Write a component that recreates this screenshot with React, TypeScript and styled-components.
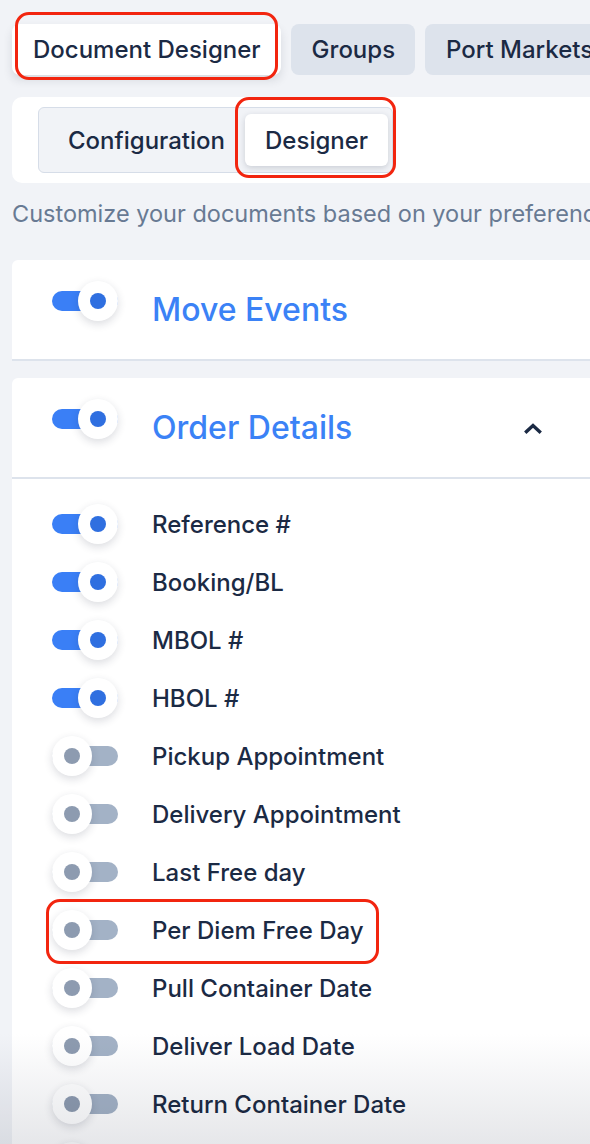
import { createGlobalStyle } from "styled-components";
import styled from "styled-components";

const GlobalStyle = createGlobalStyle`
  html, body {
    margin: 0;
    padding: 0;
    background: #f1f3f7;
    overflow: hidden;
  }
  body {
    font-family: Inter, "Noto Sans", sans-serif;
    color: #1b2a44;
  }
`;

const Page = styled.div`
  padding: 24px 0 0 12px;
  min-height: 1144px;
  box-sizing: border-box;
`;

const TabBar = styled.div`
  display: flex;
  gap: 10px;
  white-space: nowrap;
`;

const Tab = styled.div<{ $active?: boolean }>`
  position: relative;
  flex-shrink: 0;
  height: 51px;
  display: flex;
  align-items: center;
  padding: 0 20px 0 21px;
  border-radius: 8px;
  font-size: 24px;
  font-weight: 500;
  background: ${(p) => (p.$active ? "#ffffff" : "#dde3ec")};
  box-shadow: ${(p) => (p.$active ? "0 5px 10px rgba(30, 40, 60, 0.12)" : "none")};
`;

const Annotation = styled.span<{ $t: number; $r: number; $b: number; $l: number }>`
  position: absolute;
  top: ${(p) => p.$t}px;
  right: ${(p) => p.$r}px;
  bottom: ${(p) => p.$b}px;
  left: ${(p) => p.$l}px;
  border: 3px solid #f2250f;
  border-radius: 14px;
  pointer-events: none;
`;

const SubPanel = styled.div`
  margin-top: 22px;
  background: #ffffff;
  border-radius: 10px 0 0 10px;
  padding: 10px 26px;
  display: flex;
`;

const Segmented = styled.div`
  display: flex;
  align-items: center;
  height: 66px;
  box-sizing: border-box;
  padding: 0 4px 0 9px;
  background: #f1f3f7;
  border: 1px solid #d6dde8;
  border-radius: 6px;
`;

const Segment = styled.div<{ $active?: boolean }>`
  position: relative;
  height: 52px;
  display: flex;
  align-items: center;
  padding: 0 20px;
  border-radius: 6px;
  font-size: 24px;
  font-weight: 500;
  background: ${(p) => (p.$active ? "#ffffff" : "transparent")};
  box-shadow: ${(p) => (p.$active ? "0 2px 6px rgba(30, 40, 60, 0.18)" : "none")};
`;

const Subtitle = styled.p`
  margin: 16px 0 0;
  font-size: 23.5px;
  line-height: 30px;
  color: #687a93;
  white-space: nowrap;
  overflow: hidden;
`;

const Card = styled.section<{ $first?: boolean }>`
  margin-top: ${(p) => (p.$first ? 31 : 17)}px;
  background: #ffffff;
  border-radius: 6px 0 0 0;
`;

const CardHeader = styled.div`
  height: 99px;
  display: flex;
  align-items: center;
  padding: 0 40px;
  border-bottom: 2px solid #dde3ec;
`;

const HeaderToggle = styled.div`
  margin-bottom: 18px;
  display: flex;
`;

const CardTitle = styled.h2`
  margin: 0 0 0 34px;
  font-size: 32px;
  font-weight: 500;
  color: #3b82f6;
  flex: 1;
`;

const Chevron = styled.svg`
  margin-right: 8px;
`;

const List = styled.div`
  padding-top: 16px;
`;

const Row = styled.div`
  height: 58px;
  display: flex;
  align-items: center;
  padding-left: 40px;
`;

const RowContent = styled.div`
  position: relative;
  display: flex;
  align-items: center;
`;

const Label = styled.span`
  margin-left: 34px;
  font-size: 24px;
  font-weight: 500;
  color: #1b2a44;
  white-space: nowrap;
`;

const ToggleWrap = styled.div`
  position: relative;
  width: 66px;
  height: 40px;
  flex-shrink: 0;
`;

const Track = styled.div<{ $on: boolean }>`
  position: absolute;
  left: 0;
  right: 0;
  top: 10px;
  height: 20px;
  border-radius: 10px;
  background: ${(p) => (p.$on ? "#3a7ff6" : "#a3b2c6")};
`;

const Knob = styled.div<{ $on: boolean }>`
  position: absolute;
  top: 0;
  left: ${(p) => (p.$on ? 26 : 0)}px;
  width: 40px;
  height: 40px;
  border-radius: 50%;
  background: #ffffff;
  box-shadow: 0 3px 9px rgba(30, 40, 60, 0.16);
  display: flex;
  align-items: center;
  justify-content: center;

  &::after {
    content: "";
    width: 16px;
    height: 16px;
    border-radius: 50%;
    background: ${(p) => (p.$on ? "#2f6fe0" : "#8d9bb0")};
  }
`;

// scroll shade at the bottom edge; multiply keeps the dark text dark
const BottomFade = styled.div`
  position: fixed;
  left: 0;
  right: 0;
  bottom: 0;
  height: 110px;
  pointer-events: none;
  mix-blend-mode: multiply;
  background: linear-gradient(to bottom, #ffffff, #e6e7ea);
`;

const Toggle = ({ on }: { on: boolean }) => (
  <ToggleWrap>
    <Track $on={on} />
    <Knob $on={on} />
  </ToggleWrap>
);

const fields = [
  { label: "Reference #", on: true },
  { label: "Booking/BL", on: true },
  { label: "MBOL #", on: true },
  { label: "HBOL #", on: true },
  { label: "Pickup Appointment", on: false },
  { label: "Delivery Appointment", on: false },
  { label: "Last Free day", on: false },
  { label: "Per Diem Free Day", on: false, marked: true },
  { label: "Pull Container Date", on: false },
  { label: "Deliver Load Date", on: false },
  { label: "Return Container Date", on: false },
  { label: "Cutoff Date", on: false },
];

export default function App() {
  return (
    <>
      <GlobalStyle />
      <Page>
        <TabBar>
          <Tab $active>
            Document Designer
            <Annotation $t={-12} $r={3} $b={-5} $l={3} />
          </Tab>
          <Tab>Groups</Tab>
          <Tab>Port Markets</Tab>
        </TabBar>

        <SubPanel>
          <Segmented>
            <Segment>Configuration</Segment>
            <Segment $active>
              Designer
              <Annotation $t={-17} $r={-8} $b={-12} $l={-10} />
            </Segment>
          </Segmented>
        </SubPanel>

        <Subtitle>Customize your documents based on your preferences and requirements</Subtitle>

        <Card $first>
          <CardHeader>
            <HeaderToggle>
              <Toggle on />
            </HeaderToggle>
            <CardTitle>Move Events</CardTitle>
          </CardHeader>
        </Card>

        <Card>
          <CardHeader>
            <HeaderToggle>
              <Toggle on />
            </HeaderToggle>
            <CardTitle>Order Details</CardTitle>
            <Chevron width="18" height="12" viewBox="0 0 18 12" fill="none">
              <polyline
                points="2.5,9.5 9,3.5 15.5,9.5"
                stroke="#1b2a44"
                strokeWidth="3.4"
                strokeLinecap="square"
                strokeLinejoin="miter"
              />
            </Chevron>
          </CardHeader>
          <List>
            {fields.map((f) => (
              <Row key={f.label}>
                <RowContent>
                  <Toggle on={f.on} />
                  <Label>{f.label}</Label>
                  {f.marked && <Annotation $t={-11} $r={-15} $b={-14} $l={-6} />}
                </RowContent>
              </Row>
            ))}
          </List>
        </Card>
      </Page>
      <BottomFade />
    </>
  );
}
